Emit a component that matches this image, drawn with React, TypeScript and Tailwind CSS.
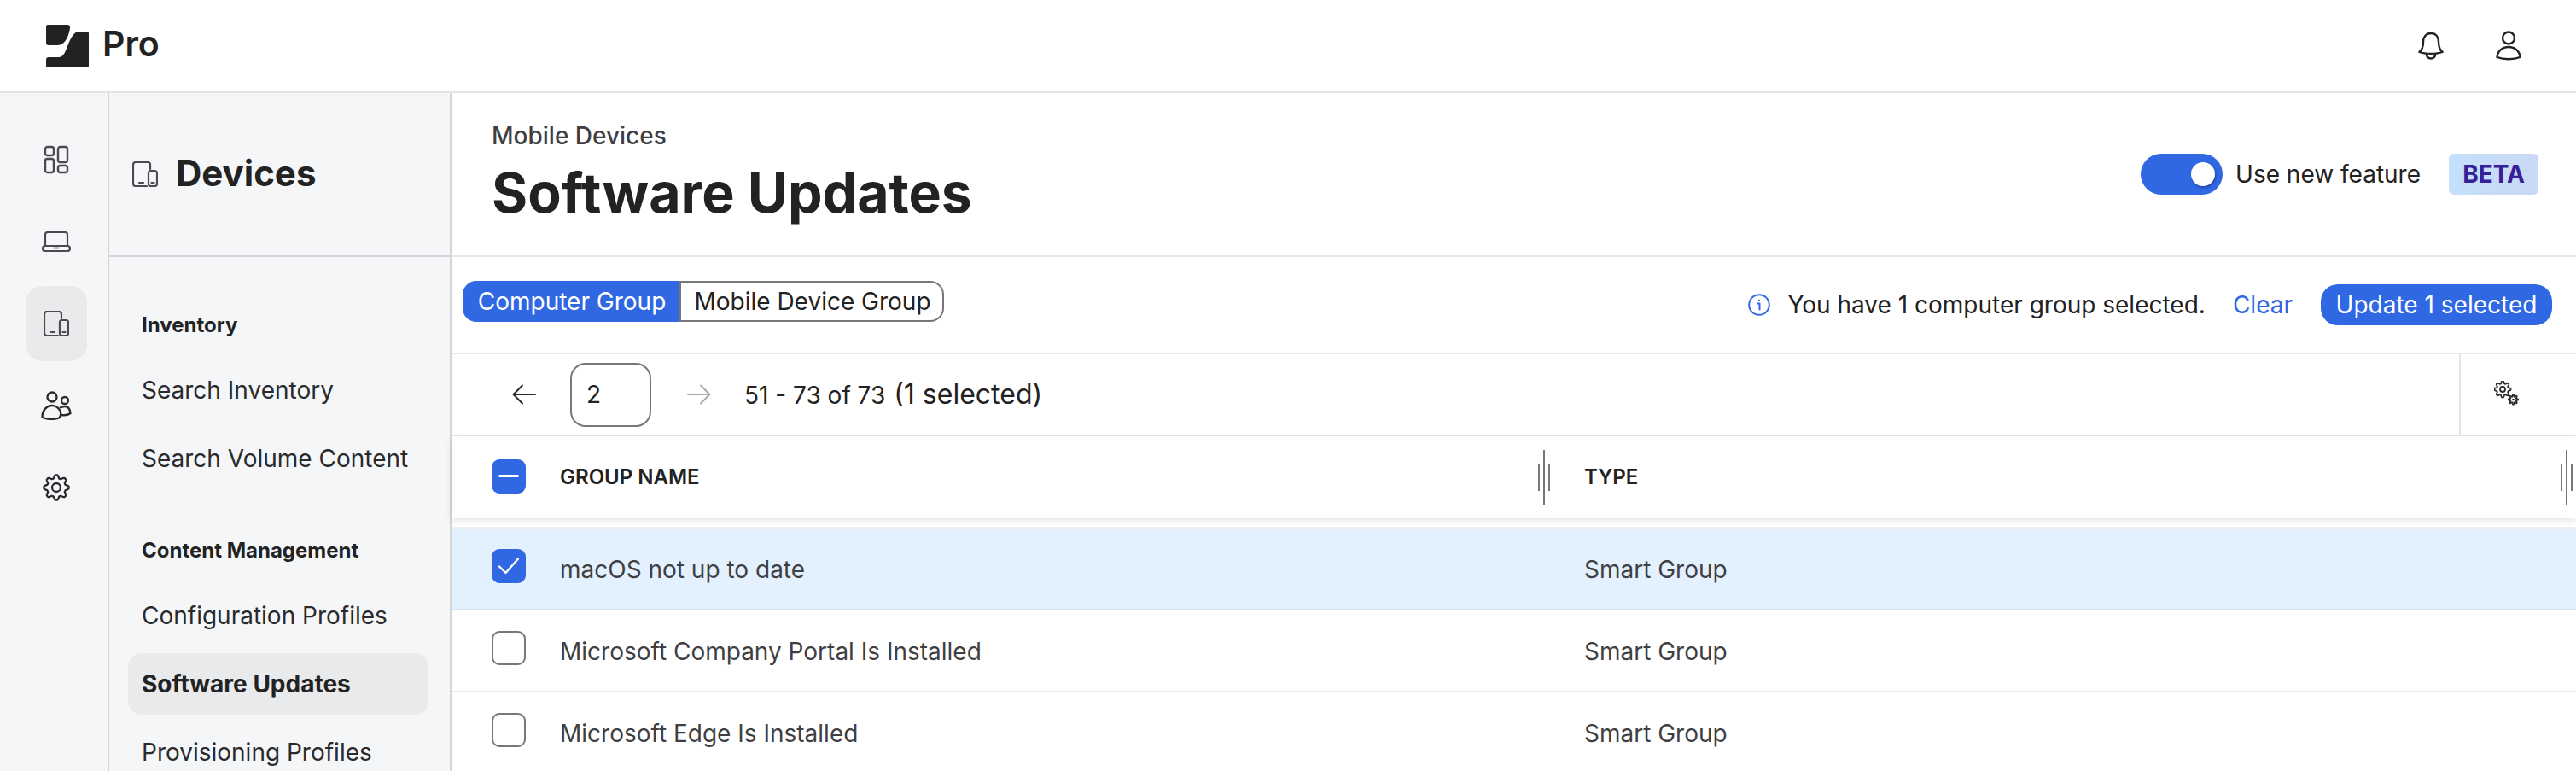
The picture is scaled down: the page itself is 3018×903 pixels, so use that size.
import React from 'react';

// Gear outline sampled from a wavy radius, good enough for the small toolbar icons
function gearPath(cx: number, cy: number, r: number, amp: number, teeth: number) {
  const pts: string[] = [];
  for (let i = 0; i < 240; i++) {
    const t = (i / 240) * Math.PI * 2;
    const wave = Math.max(-0.75, Math.min(0.75, Math.cos(teeth * t))) / 0.75;
    const rr = r + amp * wave;
    pts.push(`${(cx + rr * Math.sin(t)).toFixed(2)} ${(cy - rr * Math.cos(t)).toFixed(2)}`);
  }
  return 'M' + pts.join('L') + 'Z';
}

function Logo() {
  return (
    <svg width="50" height="50" viewBox="0 0 50 50" fill="#222222">
      <path d="M2 0H25C27 0 28.500 1.500 28 4C27 10 24 24 13 24H3C1 24 0 23 0 21V2C0 .9.9 0 2 0Z" />
      <path d="M36 8H48C49 8 50 9 50 10V48C50 49 49 50 48 50H2C1 50 0 49 0 48V41C0 39 1 38 3 38H15C25 38 24 16 36 8Z" />
    </svg>
  );
}

function DashboardIcon() {
  return (
    <svg width="30" height="34" viewBox="0 0 30 34" fill="none" stroke="#4a4a4f" strokeWidth="2.400">
      <rect x="2" y="2" width="10" height="10" rx="2.500" />
      <rect x="17" y="2" width="11" height="18" rx="2.500" />
      <rect x="2" y="16" width="10" height="16" rx="2.500" />
      <rect x="17" y="24" width="11" height="8" rx="2.500" />
    </svg>
  );
}

function LaptopIcon() {
  return (
    <svg width="34" height="24" viewBox="0 0 34 24" fill="none" stroke="#4a4a4f" strokeWidth="2.200">
      <path d="M4 17V4C4 2.300 5.300 1 7 1H27C28.700 1 30 2.300 30 4V17" />
      <rect x="1" y="17" width="32" height="6" rx="3" />
      <path d="M14 19.500H20" strokeWidth="1.600" />
    </svg>
  );
}

function DevicesIcon() {
  return (
    <svg width="30" height="30" viewBox="0 0 30 30" fill="none" stroke="#4a4a4f" strokeWidth="2.200" strokeLinecap="round">
      <path d="M17 29H4C2.300 29 1 27.700 1 26V4C1 2.300 2.300 1 4 1H18C19.700 1 21 2.300 21 4V9" />
      <rect x="19" y="11" width="10" height="18" rx="2.500" />
      <path d="M8 25H13" />
      <path d="M22.500 25H25.500" />
    </svg>
  );
}

function PeopleIcon() {
  return (
    <svg width="36" height="34" viewBox="0 0 36 34" fill="none" stroke="#2a2a2d" strokeWidth="2.300">
      <circle cx="13" cy="7" r="5.500" />
      <circle cx="28" cy="11" r="4" />
      <path d="M1.500 30C1.500 23 6.500 17 13 17C17 17 20 19 22.500 23C24 27 23 31 20 32C14 33.500 5 33.500 1.500 30Z" />
      <path d="M22 20C23.500 18.500 25.500 18 28 18C31.500 18 34 21 34.500 26C32 28 27 28.500 23.500 28" />
    </svg>
  );
}

function GearIcon() {
  return (
    <svg width="32" height="32" viewBox="0 0 32 32" fill="none" stroke="#2a2a2d" strokeWidth="2.300" strokeLinejoin="round">
      <path d={gearPath(16, 16, 12.800, 1.800, 8)} />
      <circle cx="16" cy="16" r="5" />
    </svg>
  );
}

function BellIcon() {
  return (
    <svg width="30" height="34" viewBox="0 0 30 34" fill="none" stroke="#222222" strokeWidth="2.400" strokeLinejoin="round">
      <path d="M15 2C21 2 24 6.500 24 12C24 18 25 21 28.500 24C22 26.500 8 26.500 1.500 24C5 21 6 18 6 12C6 6.500 9 2 15 2Z" />
      <path d="M9.500 26C10 29.500 12 31.500 15 31.500C18 31.500 20 29.500 20.500 26" />
    </svg>
  );
}

function UserIcon() {
  return (
    <svg width="30" height="36" viewBox="0 0 30 36" fill="none" stroke="#222222" strokeWidth="2.400">
      <circle cx="15" cy="8.500" r="7" />
      <path d="M1.500 31C2 24 7.500 19 15 19C22.500 19 28 24 28.500 31C21 34 9 34 1.500 31Z" />
    </svg>
  );
}

function ArrowLeftIcon({ color }: { color: string }) {
  return (
    <svg width="28" height="24" viewBox="0 0 28 24" fill="none" stroke={color} strokeWidth="2" strokeLinecap="round" strokeLinejoin="round">
      <path d="M27 12H2" />
      <path d="M12 1.500L1.500 12L12 22.500" />
    </svg>
  );
}

function ArrowRightIcon({ color }: { color: string }) {
  return (
    <svg width="28" height="24" viewBox="0 0 28 24" fill="none" stroke={color} strokeWidth="2" strokeLinecap="round" strokeLinejoin="round">
      <path d="M1 12H26" />
      <path d="M16 1.500L26.500 12L16 22.500" />
    </svg>
  );
}

function InfoIcon() {
  return (
    <svg width="26" height="26" viewBox="0 0 26 26" fill="none" stroke="#3067e3" strokeWidth="2">
      <circle cx="13" cy="13" r="11.800" />
      <path d="M11 11.500H13.500V18.500" strokeLinecap="round" strokeLinejoin="round" />
      <circle cx="13" cy="7.800" r="1" fill="#3067e3" stroke="none" />
    </svg>
  );
}

function GearsIcon() {
  return (
    <svg width="29" height="29" viewBox="0 0 29 29" fill="none" stroke="#2a2a2d" strokeWidth="1.800" strokeLinejoin="round">
      <path d={gearPath(10, 10, 8.200, 1.300, 8)} />
      <circle cx="10" cy="10" r="3" />
      <path d={gearPath(22.500, 22, 4.600, 1.100, 8)} strokeWidth="1.700" />
      <circle cx="22.500" cy="22" r="1.300" fill="#2a2a2d" stroke="none" />
    </svg>
  );
}

function ResizeHandle({ className }: { className: string }) {
  return (
    <div className={className}>
      <span className="h-[32px] w-[2px] bg-[#77767b]" />
      <span className="h-[64px] w-[2px] bg-[#77767b]" />
      <span className="h-[32px] w-[2px] bg-[#77767b]" />
    </div>
  );
}

function Checkbox({ state }: { state: 'none' | 'checked' | 'mixed' }) {
  if (state === 'none') {
    return <span className="block h-[40px] w-[40px] rounded-[9px] border-2 border-[#77767b] bg-white" />;
  }
  return (
    <span className="flex h-[40px] w-[40px] items-center justify-center rounded-[9px] bg-[#3067e3]">
      {state === 'checked' ? (
        <svg width="26" height="22" viewBox="0 0 26 22" fill="none" stroke="white" strokeWidth="2.400" strokeLinecap="round" strokeLinejoin="round">
          <path d="M2 11.500L9.500 19L24 2.500" />
        </svg>
      ) : (
        <span className="block h-[3px] w-[24px] rounded-full bg-white" />
      )}
    </span>
  );
}

const railItems = [
  { icon: DashboardIcon },
  { icon: LaptopIcon },
  { icon: DevicesIcon, active: true },
  { icon: PeopleIcon },
  { icon: GearIcon },
];

const rows = [
  { name: 'macOS not up to date', state: 'checked' as const },
  { name: 'Microsoft Company Portal Is Installed', state: 'none' as const },
  { name: 'Microsoft Edge Is Installed', state: 'none' as const },
];

function NavLink({ label, active }: { label: string; active?: boolean }) {
  return (
    <div
      className={
        active
          ? 'flex h-[72px] items-center rounded-[16px] bg-[#e9eaec] px-[16px] text-[28px] font-bold text-[#222222]'
          : 'flex h-[72px] items-center px-[16px] text-[28px] text-[#2a2a2d]'
      }
    >
      {label}
    </div>
  );
}

export default function App() {
  return (
    <div className="flex h-[903px] w-[3018px] flex-col overflow-hidden bg-white font-['Inter',sans-serif] text-[#222222]">
      {/* Top bar */}
      <header className="flex h-[109px] shrink-0 items-center justify-between border-b-2 border-[#e3e4e6] pl-[54px] pr-[64px]">
        <div className="flex items-center gap-[16px]">
          <Logo />
          <span className="pb-[4px] text-[41px] font-semibold leading-none">Pro</span>
        </div>
        <div className="flex items-center gap-[61px]">
          <BellIcon />
          <UserIcon />
        </div>
      </header>

      <div className="flex min-h-0 flex-1">
        {/* Icon rail */}
        <nav className="flex w-[128px] shrink-0 flex-col gap-[8px] border-r-2 border-[#d5d6da] bg-[#f5f6f8] pl-[30px] pt-[34px]">
          {railItems.map((item, index) => (
            <div
              key={index}
              className={
                item.active
                  ? 'flex h-[88px] w-[72px] items-center justify-center rounded-[20px] bg-[#e9eaec]'
                  : 'flex h-[88px] w-[72px] items-center justify-center'
              }
            >
              <item.icon />
            </div>
          ))}
        </nav>

        {/* Section sidebar */}
        <aside className="w-[401px] shrink-0 border-r-2 border-[#d5d6da] bg-[#f5f6f8]">
          <div className="flex h-[192px] items-center gap-[21px] border-b-2 border-[#d5d6da] pl-[27px]">
            <DevicesIcon />
            <h2 className="pb-[3px] text-[42px] font-bold">Devices</h2>
          </div>
          <div className="pl-[22px] pr-[25px] pt-[61px]">
            <div className="mb-[19px] flex h-[40px] items-center px-[16px] pb-[2px] text-[24px] font-bold">Inventory</div>
            <div className="flex flex-col gap-[8px]">
              <NavLink label="Search Inventory" />
              <NavLink label="Search Volume Content" />
            </div>
            <div className="mb-[20px] mt-[52px] flex h-[40px] items-center px-[16px] text-[24px] font-bold">Content Management</div>
            <div className="flex flex-col gap-[8px]">
              <NavLink label="Configuration Profiles" />
              <NavLink label="Software Updates" active />
              <NavLink label="Provisioning Profiles" />
            </div>
          </div>
        </aside>

        {/* Main content */}
        <main className="min-w-0 flex-1">
          <div className="flex h-[192px] justify-between border-b-2 border-[#e6e6e6] pl-[47px] pr-[44px]">
            <div className="pt-[32px]">
              <p className="text-[28px] font-medium leading-[36px] text-[#3f3f43]">Mobile Devices</p>
              <h1 className="mt-[13px] text-[64.4px] font-bold leading-[72px]">Software Updates</h1>
            </div>
            <div className="flex items-center">
              <span className="flex h-[48px] w-[96px] items-center justify-end rounded-full bg-[#3067e3] pr-[9px]">
                <span className="block h-[28px] w-[28px] rounded-full bg-white shadow-[1px_2px_3px_rgba(0,0,0,0.3)]" />
              </span>
              <span className="ml-[15px] text-[28px]">Use new feature</span>
              <span className="ml-[33px] flex h-[48px] w-[105px] items-center justify-center rounded-[6px] bg-gradient-to-r from-[#c4e0fb] to-[#c9d8f5] text-[28px] font-bold text-[#35209a]">
                BETA
              </span>
            </div>
          </div>

          <div className="flex h-[114px] justify-between border-b-2 border-[#e6e6e6] pl-[13px] pr-[28px]">
            <div className="mt-[28px] flex h-[48px] text-[28px]">
              <span className="flex w-[254px] items-center justify-center rounded-l-[16px] bg-[#3067e3] pl-[2px] text-white">Computer Group</span>
              <span className="flex w-[310px] items-center justify-center rounded-r-[16px] border-2 border-[#77767b] pl-[2px] text-[#222222]">Mobile Device Group</span>
            </div>
            <div className="flex items-center text-[28px]">
              <InfoIcon />
              <span className="ml-[20px]">You have 1 computer group selected.</span>
              <span className="ml-[32px] text-[#3067e3]">Clear</span>
              <span className="ml-[33px] flex h-[48px] w-[271px] items-center justify-center rounded-[20px] bg-[#3067e3] text-white">Update 1 selected</span>
            </div>
          </div>

          <div className="flex h-[96px] items-center border-b-2 border-[#e6e6e6] pl-[71px] text-[28px]">
            <ArrowLeftIcon color="#2a2a2d" />
            <span className="ml-[40px] flex h-[75px] w-[95px] items-center rounded-[18px] border-2 border-[#77767b] pl-[17px]">2</span>
            <span className="ml-[42px] flex">
              <ArrowRightIcon color="#a9a9ad" />
            </span>
            <span className="ml-[39px]">
              51 - 73 of 73 <span className="ml-[2px] text-[32px]">(1 selected)</span>
            </span>
            <div className="ml-auto flex h-full w-[137px] items-center border-l-2 border-[#e6e6e6] pl-[39px] pb-[4px]">
              <GearsIcon />
            </div>
          </div>

          {/* Table */}
          <div className="relative z-10 grid h-[96px] grid-cols-[127px_1200px_1fr] items-center bg-white shadow-[0_3px_8px_rgba(0,0,0,0.1)]">
            <div className="pl-[47px] pb-[3px]">
              <Checkbox state="mixed" />
            </div>
            <div className="relative h-full">
              <div className="flex h-full items-center text-[24px] font-semibold">GROUP NAME</div>
              <ResizeHandle className="absolute right-[40px] top-[16px] flex h-[64px] w-[14px] items-center justify-between" />
            </div>
            <div className="relative h-full">
              <div className="flex h-full items-center text-[24px] font-semibold">TYPE</div>
              <ResizeHandle className="absolute right-[4px] top-[16px] flex h-[64px] w-[14px] items-center justify-between" />
            </div>
          </div>
          <div className="h-[12px] border-b-2 border-[#eeeeee]" />

          {rows.map((row) => (
            <div
              key={row.name}
              className={
                row.state === 'checked'
                  ? 'grid h-[96px] grid-cols-[127px_1200px_1fr] items-center border-b-2 border-[#cfe0f2] bg-[#e3f0fd] text-[28px] text-[#3f3f43]'
                  : 'grid h-[96px] grid-cols-[127px_1200px_1fr] items-center border-b-2 border-[#e9e9e9] text-[28px] text-[#3f3f43]'
              }
            >
              <div className="pl-[47px] pb-[6px]">
                <Checkbox state={row.state} />
              </div>
              <div className="pt-[2px]">{row.name}</div>
              <div className="pt-[2px]">Smart Group</div>
            </div>
          ))}
        </main>
      </div>
    </div>
  );
}
